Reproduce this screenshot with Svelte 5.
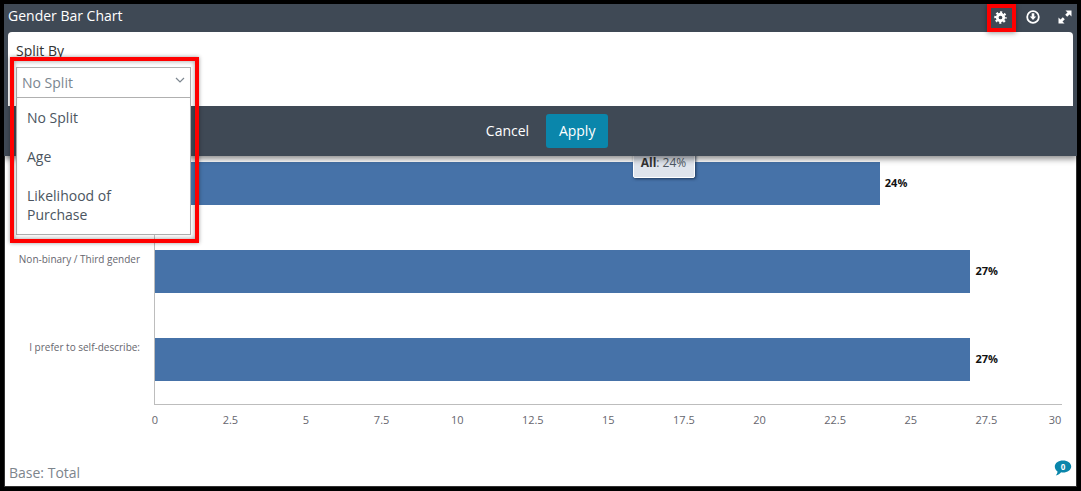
<script>
  const rows = [
    { label: '', value: 24 },
    { label: 'Non-binary / Third gender', value: 27 },
    { label: 'I prefer to self-describe:', value: 27 }
  ];
  const ticks = ['0', '2.5', '5', '7.5', '10', '12.5', '15', '17.5', '20', '22.5', '25', '27.5', '30'];
  const options = ['No Split', 'Age', 'Likelihood of Purchase'];
  const unit = 30.2;
</script>

<div class="frame">
  <div class="top">
    <header class="titlebar">
      <span class="title">Gender Bar Chart</span>
      <div class="tools">
        <button class="tool gear" aria-label="Settings">
          <svg width="13" height="13" viewBox="0 0 16 16">
            <circle cx="8" cy="8" r="4" fill="none" stroke="#fff" stroke-width="3.4"/>
            <circle cx="8" cy="8" r="6.4" fill="none" stroke="#fff" stroke-width="2.6" stroke-dasharray="2.6 2.43" stroke-dashoffset="1.3"/>
          </svg>
        </button>
        <button class="tool" aria-label="Download">
          <svg width="14" height="14" viewBox="0 0 14 14">
            <circle cx="7" cy="7" r="5.8" fill="none" stroke="#fff" stroke-width="1.8"/>
            <path fill="#fff" d="M5.7 3.2h2.600v3.200h1.900L7 9.900 3.800 6.400h1.900z"/>
          </svg>
        </button>
        <button class="tool" aria-label="Expand">
          <svg width="14" height="14" viewBox="0 0 14 14">
            <path fill="#fff" d="M7.500.5h6v6l-2-2-2.300 2.300-2-2 2.300-2.300zM6.500 13.500h-6v-6l2 2 2.300-2.300 2 2-2.300 2.300z"/>
          </svg>
        </button>
      </div>
    </header>
    <section class="panel">
      <div class="field-label">Split By</div>
    </section>
    <footer class="actions">
      <button class="cancel">Cancel</button>
      <button class="apply">Apply</button>
    </footer>
  </div>

  <div class="chart">
    <div class="tooltip"><b>All</b>: 24%</div>
    {#each rows as row}
      <div class="row">
        <div class="row-label">{row.label}</div>
        <div class="bar" style="width: {row.value * unit}px"></div>
        <div class="bar-value">{row.value}%</div>
      </div>
    {/each}
    <div class="axis">
      {#each ticks as t}
        <span class="tick">{t}</span>
      {/each}
    </div>
  </div>

  <div class="base">
    <span>Base: Total</span>
    <svg class="comment" width="18" height="16" viewBox="0 0 18 16">
      <path fill="#0a86ab" d="M9 .5c4.600 0 8.200 2.600 8.200 6s-3.600 6-8.200 6c-.7 0-1.300-.1-1.900-.2C6 13.800 4.200 15 1.800 15.400c1-1 1.600-2.200 1.700-3.900C1.800 10.400.8 8.600.8 6.500.8 3.100 4.400.5 9 .5z"/>
      <text x="9" y="9.500" text-anchor="middle">0</text>
    </svg>
  </div>

  <div class="dropdown">
    <div class="select">
      <span>No Split</span>
      <svg width="10" height="6" viewBox="0 0 10 6"><path d="M1 1l4 4 4-4" fill="none" stroke="#7d8790" stroke-width="1.2"/></svg>
    </div>
    <ul class="menu">
      {#each options as o}
        <li>{o}</li>
      {/each}
    </ul>
  </div>

  <div class="mark mark-drop"></div>
  <div class="mark mark-gear"></div>
</div>

<style>
  :global(body) {
    margin: 0;
    background: #fff;
  }

  .frame {
    position: relative;
    box-sizing: border-box;
    width: 1081px;
    height: 491px;
    overflow: hidden;
    border: 4px solid #000;
    outline: 1px solid #333;
    outline-offset: -5px;
    background: #fff;
    font-family: "Open Sans", sans-serif;
    display: flex;
    flex-direction: column;
  }

  button {
    font-family: inherit;
    border: none;
    background: none;
    padding: 0;
    cursor: pointer;
  }

  .top {
    background: #3f4955;
    box-shadow: 0 3px 6px rgba(0, 0, 0, 0.45);
    position: relative;
    z-index: 3;
    height: 152px;
    flex: none;
  }

  .titlebar {
    height: 28px;
    display: flex;
    align-items: center;
    justify-content: space-between;
    padding-left: 4px;
  }

  .title {
    color: #fff;
    font-size: 14px;
    position: relative;
    top: -3px;
  }

  .tools {
    display: flex;
    align-items: center;
    gap: 8px;
    margin-bottom: 2px;
  }

  .tool {
    width: 24px;
    height: 26px;
    display: flex;
    align-items: center;
    justify-content: center;
  }

  .gear {
    padding-right: 1px;
  }

  .panel {
    margin: 0 4px;
    height: 74px;
    box-sizing: border-box;
    background: #fff;
    border-radius: 4px 4px 0 0;
    padding: 9px 8px;
  }

  .field-label {
    font-size: 14px;
    line-height: 19px;
    color: #333;
  }

  .actions {
    height: 50px;
    display: flex;
    align-items: center;
    justify-content: center;
    gap: 17px;
    padding-left: 13px;
  }

  .cancel {
    color: #fff;
    font-size: 14px;
    margin-bottom: 1px;
  }

  .apply {
    width: 62px;
    height: 34px;
    border-radius: 3px;
    background: #0a86ab;
    color: #fff;
    font-size: 14px;
    font-weight: 500;
    margin-bottom: 1px;
  }

  .chart {
    flex: none;
    position: relative;
    margin-top: 6px;
  }

  .row {
    height: 43px;
    margin-bottom: 45px;
    display: flex;
    align-items: center;
    padding-left: 151px;
    position: relative;
  }

  .row::before {
    content: "";
    position: absolute;
    left: 150px;
    top: -7px;
    bottom: -45px;
    width: 1px;
    background: #bdbdbd;
  }

  .row:nth-last-child(2)::before {
    bottom: -23px;
  }

  .row-label {
    position: absolute;
    left: 0;
    top: 2px;
    width: 136px;
    text-align: right;
    font-size: 10px;
    line-height: 14px;
    color: #66666e;
  }

  .bar {
    height: 100%;
    background: #4672a8;
    position: relative;
  }

  .bar-value {
    margin-left: 5px;
    margin-bottom: 2px;
    font-size: 11px;
    font-weight: 700;
    color: #111;
  }

  .tooltip {
    position: absolute;
    left: 629px;
    top: -10px;
    width: 62px;
    height: 26px;
    box-sizing: border-box;
    padding: 1px 1px 0 0;
    border-radius: 0 0 2px 2px;
    background: #dfe4ec;
    border: 1px solid #fff;
    box-shadow: 1px 1px 3px rgba(20, 40, 70, 0.8);
    text-align: center;
    font-size: 12px;
    line-height: 18px;
    color: #4f5964;
    z-index: 2;
  }

  .tooltip b {
    font-weight: 700;
    color: #333;
  }

  .axis {
    margin-top: -22px;
    margin-left: 150px;
    width: 908px;
    border-top: 1px solid #bdbdbd;
    display: flex;
    padding-top: 7px;
    height: 18px;
    position: relative;
  }

  .tick {
    flex: none;
    width: 75.6px;
    text-align: center;
    font-size: 11px;
    line-height: 15px;
    color: #66666e;
    position: relative;
    left: -37px;
  }

  .tick:last-child {
    left: -44px;
  }

  .base {
    flex: 1;
    display: flex;
    justify-content: space-between;
    align-items: flex-end;
    padding: 0 5px 5px 5px;
    font-size: 14px;
    line-height: 19px;
    color: #7d858c;
  }

  .comment {
    margin-bottom: 6px;
  }

  .comment text {
    font-size: 8px;
    font-weight: 700;
    fill: #fff;
  }

  .dropdown {
    position: absolute;
    left: 12px;
    top: 63px;
    width: 175px;
    box-sizing: border-box;
    border: 1px solid #b0b0b0;
    background: #fff;
    z-index: 4;
  }

  .select {
    height: 29px;
    display: flex;
    align-items: center;
    justify-content: space-between;
    padding: 0 4px 0 5px;
    border-bottom: 1px solid #b0b0b0;
    font-size: 14px;
    color: #7b8690;
  }

  .select svg {
    margin-bottom: 5px;
    margin-right: 1px;
  }

  .menu {
    list-style: none;
    margin: 0;
    padding: 0;
  }

  .menu li {
    padding: 10px 30px 10px 10px;
    font-size: 14px;
    line-height: 19px;
    color: #4b5560;
  }

  .mark {
    position: absolute;
    border: 4px solid #f00;
    box-sizing: border-box;
    z-index: 5;
    pointer-events: none;
  }

  .mark-drop {
    left: 6px;
    top: 53px;
    width: 189px;
    height: 186px;
    box-shadow: 0 0 4px rgba(0, 0, 0, 0.4), inset 0 0 5px rgba(0, 0, 0, 0.4);
  }

  .mark-gear {
    left: 983px;
    top: 0;
    width: 29px;
    height: 28px;
    box-shadow: 0 1px 5px rgba(0, 0, 0, 0.4);
  }
</style>
